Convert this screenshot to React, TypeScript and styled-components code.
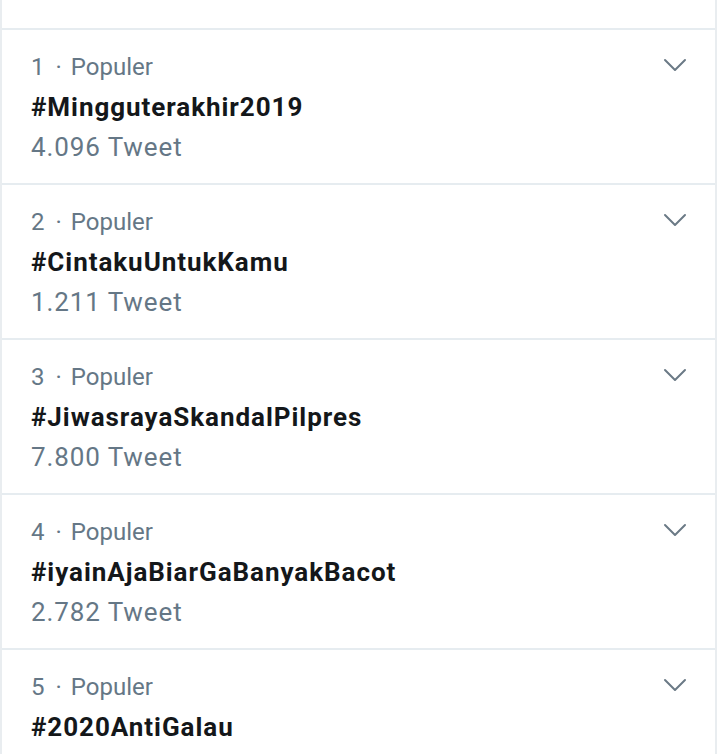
import React from "react";
import styled, { createGlobalStyle } from "styled-components";

const Global = createGlobalStyle`
  html, body { margin: 0; padding: 0; background: #ffffff; }
  body { font-family: Roboto, "Noto Sans", Arial, sans-serif; }
`;

const Card = styled.div`
  width: 713px;
  height: 754px;
  overflow: hidden;
  border-left: 2px solid #e9edf0;
  border-right: 2px solid #e9edf0;
  background: #ffffff;
`;

const TopStub = styled.div`
  height: 28px;
`;

const Row = styled.div`
  display: flex;
  align-items: flex-start;
  justify-content: space-between;
  border-top: 2px solid #e6ecf0;
  padding: 18px 0 16px 29px;
  height: 119px;
`;

const Info = styled.div`
  display: flex;
  flex-direction: column;
`;

const Meta = styled.div`
  font-size: 24px;
  line-height: 39px;
  color: #657786;
`;

const Dot = styled.span`
  margin: 0 9px 0 11px;
`;

const Tag = styled.div`
  font-size: 26px;
  line-height: 40px;
  font-weight: 700;
  letter-spacing: 0.95px;
  color: #14171a;
`;

const Count = styled.div`
  font-size: 26px;
  line-height: 40px;
  letter-spacing: 0.9px;
  color: #657786;
`;

const Chevron = styled.svg`
  width: 24px;
  height: 14px;
  margin: 10px 28px 0 0;
  flex-shrink: 0;
`;

const trends = [
  { rank: 1, tag: "#Mingguterakhir2019", count: "4.096 Tweet" },
  { rank: 2, tag: "#CintakuUntukKamu", count: "1.211 Tweet" },
  { rank: 3, tag: "#JiwasrayaSkandalPilpres", count: "7.800 Tweet" },
  { rank: 4, tag: "#iyainAjaBiarGaBanyakBacot", count: "2.782 Tweet" },
  { rank: 5, tag: "#2020AntiGalau", count: "" },
];

export default function App() {
  return (
    <>
      <Global />
      <Card>
        <TopStub />
        {trends.map((t) => (
          <Row key={t.rank}>
            <Info>
              <Meta>
                {t.rank}
                <Dot>·</Dot>
                Populer
              </Meta>
              <Tag>{t.tag}</Tag>
              {t.count && <Count>{t.count}</Count>}
            </Info>
            <Chevron viewBox="0 0 24 14" fill="none">
              <path d="M2 2 L12 12 L22 2" stroke="#6b7a86" strokeWidth="2" strokeLinecap="round" strokeLinejoin="round" />
            </Chevron>
          </Row>
        ))}
      </Card>
    </>
  );
}
